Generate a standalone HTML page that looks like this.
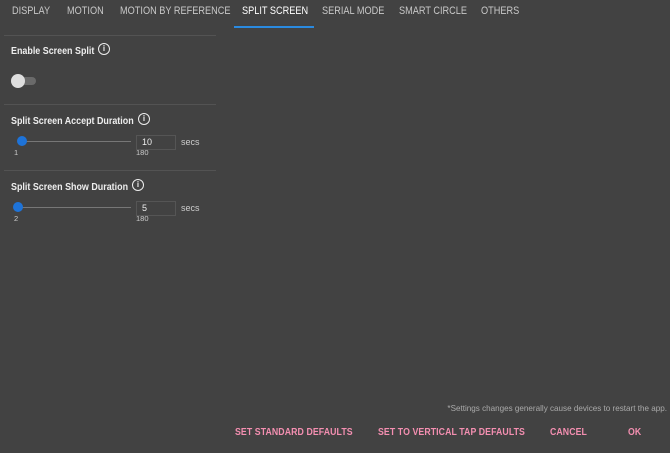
<!DOCTYPE html>
<html><head><style>
body{margin:0;width:670px;height:453px;background:#424242;font-family:"Liberation Sans",sans-serif;position:relative;overflow:hidden;color:#fff}
.a{position:absolute;white-space:nowrap}
.s{transform:scaleX(0.85);transform-origin:0 0}
.tab{font-size:10.8px;color:#c8c8c8;top:5px}
.h{font-size:10.5px;font-weight:bold;color:#eee}
.hr{position:absolute;left:4px;width:212px;height:1px;background:#535353}
.btn{font-size:10.3px;color:#f48fb1;top:427px;font-weight:bold;letter-spacing:0.1px}
.info{position:absolute;width:10px;height:10px;border:1.3px solid #eee;border-radius:50%;font-size:8px;font-weight:bold;text-align:center;line-height:10px;color:#eee}
.track{position:absolute;height:1px;background:#777;left:18px;width:113px}
.thumb{position:absolute;width:10px;height:10px;border-radius:50%;background:#1e73d8}
.box{position:absolute;left:136px;border:1px solid #555;font-size:9px;color:#eee;line-height:13px;padding-left:5px;box-sizing:border-box;width:40px;height:15px}
.sm{font-size:7.5px;color:#ccc}
.secs{font-size:9px;color:#ccc}
</style></head><body>
<div class="a tab s" style="left:12px">DISPLAY</div>
<div class="a tab s" style="left:67px">MOTION</div>
<div class="a tab s" style="left:120px">MOTION BY REFERENCE</div>
<div class="a tab s" style="left:242px;color:#fff">SPLIT SCREEN</div>
<div class="a tab s" style="left:322px">SERIAL MODE</div>
<div class="a tab s" style="left:399px">SMART CIRCLE</div>
<div class="a tab s" style="left:481px">OTHERS</div>
<div class="a" style="left:234px;top:26px;width:80px;height:2px;background:#2a8ae0"></div>
<div class="hr" style="top:35px"></div>
<div class="hr" style="top:104px"></div>
<div class="hr" style="top:170px"></div>

<div class="a h s" style="left:11px;top:45px">Enable Screen Split</div>
<div class="info" style="left:98px;top:43px">i</div>
<div class="a" style="left:12px;top:77px;width:24px;height:8px;border-radius:4px;background:#6a6a6a"></div>
<div class="a" style="left:11px;top:74px;width:14px;height:14px;border-radius:50%;background:#dedede"></div>

<div class="a h s" style="left:11px;top:115px">Split Screen Accept Duration</div>
<div class="info" style="left:138px;top:113px">i</div>
<div class="track" style="top:141px"></div>
<div class="thumb" style="left:17px;top:136px"></div>
<div class="a sm" style="left:14px;top:148px">1</div>
<div class="a sm" style="left:136px;top:148px">180</div>
<div class="box" style="top:135px">10</div>
<div class="a secs" style="left:181px;top:137px">secs</div>

<div class="a h s" style="left:11px;top:181px">Split Screen Show Duration</div>
<div class="info" style="left:132px;top:179px">i</div>
<div class="track" style="top:207px"></div>
<div class="thumb" style="left:13px;top:202px"></div>
<div class="a sm" style="left:14px;top:214px">2</div>
<div class="a sm" style="left:136px;top:214px">180</div>
<div class="box" style="top:201px">5</div>
<div class="a secs" style="left:181px;top:203px">secs</div>

<div class="a" style="right:3px;top:404px;font-size:8.1px;color:#aaa">*Settings changes generally cause devices to restart the app.</div>
<div class="a btn s" style="left:235px">SET STANDARD DEFAULTS</div>
<div class="a btn s" style="left:378px">SET TO VERTICAL TAP DEFAULTS</div>
<div class="a btn s" style="left:550px">CANCEL</div>
<div class="a btn s" style="left:628px">OK</div>
</body></html>
